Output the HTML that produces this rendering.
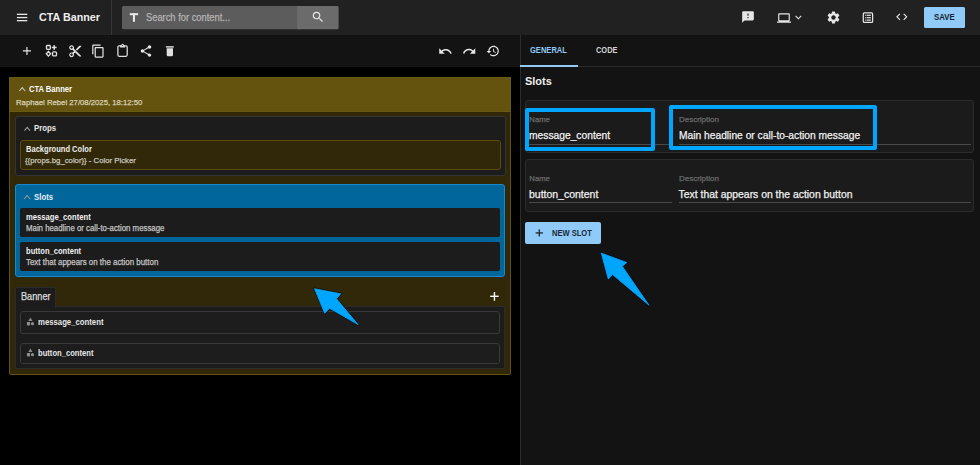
<!DOCTYPE html>
<html><head><meta charset="utf-8">
<style>
*{box-sizing:border-box;margin:0;padding:0}
html,body{width:980px;height:465px;overflow:hidden;background:#000;font-family:"Liberation Sans",sans-serif;color:#fff;position:relative}
.a{position:absolute}
.t{white-space:nowrap;line-height:1;transform-origin:0 0}
svg{display:block;overflow:visible}
</style></head><body>
<!-- backgrounds -->
<div class="a" style="left:0;top:0;width:980px;height:35px;background:#212121"></div>
<div class="a" style="left:0;top:35px;width:520px;height:31.5px;background:#131313"></div>
<div class="a" style="left:520px;top:35px;width:460px;height:430px;background:#131313"></div>
<div class="a" style="left:520px;top:35px;width:1px;height:430px;background:#2c2c2c"></div>

<!-- ===== top bar ===== -->
<svg class="a" style="left:0;top:0" width="980" height="35">
  <g fill="#e6e6e6">
    <rect x="16.9" y="13.7" width="10.4" height="1.3"/>
    <rect x="16.9" y="16.9" width="10.4" height="1.3"/>
    <rect x="16.9" y="20.0" width="10.4" height="1.3"/>
  </g>
  <rect x="111" y="0" width="1" height="35" fill="#363636"/>
  <rect x="122" y="6" width="178" height="23.2" rx="1.5" fill="#5c5c5c"/>
  <rect x="297.4" y="6" width="41.2" height="23.2" rx="1.5" fill="#6b6b6b"/><rect x="297.4" y="6" width="4" height="23.2" fill="#6b6b6b"/>
  <!-- T icon -->
  <g fill="#e8e8e8">
    <rect x="129.8" y="13.2" width="8.3" height="2"/>
    <rect x="132.9" y="13.2" width="2.1" height="8.6"/>
  </g>
</svg>
<svg class="a" style="left:311.2px;top:10.3px" width="14" height="14" viewBox="0 0 24 24"><path fill="#e6e6e6" d="M15.5 14h-.79l-.28-.27A6.47 6.47 0 0 0 16 9.5 6.5 6.5 0 1 0 9.5 16c1.61 0 3.09-.59 4.23-1.57l.27.28v.79l5 4.99L20.49 19l-4.99-5zm-6 0C7.01 14 5 11.99 5 9.5S7.01 5 9.5 5 14 7.01 14 9.5 11.99 14 9.5 14z"/></svg>
<!-- right icons -->
<svg class="a" style="left:741px;top:10px" width="14" height="14" viewBox="0 0 24 24"><path fill="#e6e6e6" d="M20 2H4c-1.1 0-1.99.9-1.99 2L2 22l4-4h14c1.1 0 2-.9 2-2V4c0-1.1-.9-2-2-2zm-7 12h-2v-2h2v2zm0-4h-2V6h2v4z"/></svg>
<svg class="a" style="left:777px;top:10.6px" width="14" height="14" viewBox="0 0 24 24"><path fill="#e6e6e6" d="M20 18c1.1 0 1.99-.9 1.99-2L22 6c0-1.1-.9-2-2-2H4c-1.1 0-2 .9-2 2v10c0 1.1.9 2 2 2H0v2h24v-2h-4zM4 6h16v10H4V6z"/></svg>
<svg class="a" style="left:791.8px;top:11.1px" width="12.8" height="12.8" viewBox="0 0 24 24"><path fill="#e6e6e6" d="M7.41 8.59L12 13.17l4.59-4.58L18 10l-6 6-6-6 1.41-1.41z"/></svg>
<svg class="a" style="left:826px;top:10px" width="15" height="15" viewBox="0 0 24 24"><path fill="#e6e6e6" d="M19.14 12.94c.04-.3.06-.61.06-.94 0-.32-.02-.64-.07-.94l2.03-1.58a.49.49 0 0 0 .12-.61l-1.92-3.32a.488.488 0 0 0-.59-.22l-2.39.96c-.5-.38-1.03-.7-1.62-.94l-.36-2.54a.484.484 0 0 0-.48-.41h-3.84c-.24 0-.43.17-.47.41l-.36 2.54c-.59.24-1.13.57-1.62.94l-2.39-.96c-.22-.08-.47 0-.59.22L2.74 8.87c-.12.21-.08.47.12.61l2.03 1.58c-.05.3-.09.63-.09.94s.02.64.07.94l-2.03 1.58a.49.49 0 0 0-.12.61l1.92 3.32c.12.22.37.29.59.22l2.39-.96c.5.38 1.03.7 1.62.94l.36 2.54c.05.24.24.41.48.41h3.84c.24 0 .44-.17.47-.41l.36-2.54c.59-.24 1.13-.56 1.62-.94l2.39.96c.22.08.47 0 .59-.22l1.92-3.32c.12-.22.07-.47-.12-.61l-2.01-1.58zM12 15.6c-1.98 0-3.6-1.62-3.6-3.6s1.62-3.6 3.6-3.6 3.6 1.62 3.6 3.6-1.62 3.6-3.6 3.6z"/></svg>
<svg class="a" style="left:0;top:0" width="980" height="35"><rect x="863.3" y="12.9" width="9.3" height="9.5" rx="1" fill="none" stroke="#e6e6e6" stroke-width="1.25"/><g fill="#e0e0e0"><rect x="865.2" y="14.7" width="1.2" height="1.2"/><rect x="866.9" y="14.7" width="4" height="1.2"/><rect x="865.2" y="17.1" width="1.2" height="1.2"/><rect x="866.9" y="17.1" width="4" height="1.2"/><rect x="865.2" y="19.5" width="1.2" height="1.2"/><rect x="866.9" y="19.5" width="4" height="1.2"/></g></svg>
<svg class="a" style="left:895px;top:10px" width="13.6" height="13.6" viewBox="0 0 24 24"><path fill="#e6e6e6" d="M9.4 16.6L4.8 12l4.6-4.6L8 6l-6 6 6 6 1.4-1.4zm5.2 0l4.6-4.6-4.6-4.6L16 6l6 6-6 6-1.4-1.4z"/></svg>
<div class="a" style="left:924px;top:7px;width:41px;height:21.3px;background:#90caf9;border-radius:1.5px"></div>

<!-- ===== toolbar ===== -->
<svg class="a" style="left:20.1px;top:44px" width="13.9" height="13.9" viewBox="0 0 24 24"><path fill="#e6e6e6" d="M19 13h-6v6h-2v-6H5v-2h6V5h2v6h6v2z"/></svg>
<svg class="a" style="left:0;top:0" width="200" height="66">
  <g fill="none" stroke="#e0e0e0" stroke-width="1.35">
    <rect x="46.5" y="45.5" width="3.8" height="3.8" rx="0.8"/>
    <path d="M48.45 51.5 L50.6 53.8 L48.45 56.1 L46.3 53.8 Z"/>
    <rect x="52.5" y="51.9" width="4" height="4" rx="1.2"/>
  </g>
  <g fill="#e0e0e0">
    <rect x="51.8" y="46.7" width="4.8" height="1.5"/>
    <rect x="53.45" y="45.1" width="1.5" height="4.7"/>
  </g>
  <!-- trash -->
  <g fill="#e0e0e0">
    <rect x="165.8" y="45.9" width="8.1" height="1.8" rx="0.6" fill="#b8b8b8"/>
    <path d="M166.7 48.2 H173 V54.8 Q173 56.3 171.5 56.3 H168.2 Q166.7 56.3 166.7 54.8 Z"/>
  </g>
  <!-- clipboard -->
  <g fill="none" stroke="#e0e0e0" stroke-width="1.25">
    <rect x="117.9" y="45.9" width="9.3" height="10.4" rx="1.2"/>
  </g>
  <path d="M120.1 47.6 H125.1 V45.9 Q125.1 45.2 124.4 45.2 H123.9 Q123.7 43.8 122.6 43.8 Q121.5 43.8 121.3 45.2 H120.8 Q120.1 45.2 120.1 45.9 Z" fill="#e0e0e0"/><circle cx="122.6" cy="45.3" r="0.55" fill="#131313"/>
</svg>
<svg class="a" style="left:67.7px;top:44.2px" width="14.4" height="14.4" viewBox="0 0 24 24"><path fill="#e6e6e6" d="M9.64 7.64c.23-.5.36-1.05.36-1.64 0-2.21-1.79-4-4-4S2 3.79 2 6s1.79 4 4 4c.59 0 1.14-.13 1.64-.36L10 12l-2.36 2.36C7.14 14.13 6.59 14 6 14c-2.21 0-4 1.79-4 4s1.79 4 4 4 4-1.79 4-4c0-.59-.13-1.14-.36-1.64L12 14l7 7h3v-1L9.64 7.64zM6 8c-1.1 0-2-.89-2-2s.9-2 2-2 2 .89 2 2-.9 2-2 2zm0 12c-1.1 0-2-.89-2-2s.9-2 2-2 2 .89 2 2-.9 2-2 2zm6-7.5c-.28 0-.5-.22-.5-.5s.22-.5.5-.5.5.22.5.5-.22.5-.5.5zM19 3l-6 6 2 2 7-7V3z"/></svg>
<svg class="a" style="left:91.4px;top:43.7px" width="14.4" height="14.4" viewBox="0 0 24 24"><path fill="#e6e6e6" d="M16 1H4c-1.1 0-2 .9-2 2v14h2V3h12V1zm3 4H8c-1.1 0-2 .9-2 2v14c0 1.1.9 2 2 2h11c1.1 0 2-.9 2-2V7c0-1.1-.9-2-2-2zm0 16H8V7h11v14z"/></svg>
<svg class="a" style="left:139.15px;top:43.8px" width="14" height="14" viewBox="0 0 24 24"><path fill="#e6e6e6" d="M18 16.08c-.76 0-1.44.3-1.96.77L8.91 12.7c.05-.23.09-.46.09-.7s-.04-.47-.09-.7l7.05-4.11c.54.5 1.25.81 2.04.81 1.66 0 3-1.34 3-3s-1.34-3-3-3-3 1.34-3 3c0 .24.04.47.09.7L8.04 9.81C7.5 9.31 6.79 9 6 9c-1.66 0-3 1.34-3 3s1.34 3 3 3c.79 0 1.5-.31 2.04-.81l7.12 4.16c-.05.21-.08.43-.08.65 0 1.61 1.31 2.92 2.92 2.92 1.61 0 2.92-1.31 2.92-2.92s-1.31-2.92-2.92-2.92z"/></svg>
<svg class="a" style="left:437.6px;top:43.5px" width="14.8" height="14.8" viewBox="0 0 24 24"><path fill="#e6e6e6" d="M12.5 8c-2.65 0-5.05.99-6.9 2.6L2 7v9h9l-3.62-3.62c1.39-1.16 3.16-1.88 5.12-1.88 3.54 0 6.55 2.31 7.6 5.5l2.37-.78C21.08 11.03 17.15 8 12.5 8z"/></svg>
<svg class="a" style="left:461.8px;top:43.6px" width="14.5" height="14.5" viewBox="0 0 24 24"><path fill="#e6e6e6" d="M18.4 10.6C16.55 8.99 14.15 8 11.5 8c-4.65 0-8.58 3.03-9.96 7.22L3.9 16c1.05-3.19 4.05-5.5 7.6-5.5 1.95 0 3.73.72 5.12 1.88L13 16h9V7l-3.6 3.6z"/></svg>
<svg class="a" style="left:486.1px;top:44px" width="14" height="14" viewBox="0 0 24 24"><path fill="#e6e6e6" d="M13 3c-4.97 0-9 4.03-9 9H1l3.89 3.89.07.14L9 12H6c0-3.87 3.13-7 7-7s7 3.13 7 7-3.13 7-7 7c-1.93 0-3.68-.79-4.94-2.06l-1.42 1.42C8.27 19.99 10.51 21 13 21c4.97 0 9-4.03 9-9s-4.03-9-9-9zm-1 5v5l4.28 2.54.72-1.21-3.5-2.08V8H12z"/></svg>

<!-- ===== right panel ===== -->
<div class="a" style="left:521px;top:66px;width:459px;height:1px;background:#2a2a2a"></div>
<div class="a" style="left:520px;top:65px;width:57.5px;height:2px;background:#90caf9"></div>
<!-- card 1 -->
<div class="a" style="left:525px;top:100.3px;width:449.4px;height:52.6px;background:#1b1b1b;border:1px solid #2b2b2b;border-radius:3px"></div>
<div class="a" style="left:525px;top:158.5px;width:449.4px;height:53.1px;background:#1b1b1b;border:1px solid #2b2b2b;border-radius:3px"></div>
<div class="a" style="left:529px;top:144px;width:142.6px;height:1px;background:#4a4a4a"></div>
<div class="a" style="left:678.6px;top:144px;width:292.4px;height:1px;background:#4a4a4a"></div>
<div class="a" style="left:529px;top:202.4px;width:142.6px;height:1px;background:#4a4a4a"></div>
<div class="a" style="left:678.6px;top:202.4px;width:292.4px;height:1px;background:#4a4a4a"></div>
<!-- highlight boxes -->
<div class="a" style="left:525px;top:108px;width:130px;height:43px;border:4px solid #00a6fd;border-radius:2px"></div>
<div class="a" style="left:669.2px;top:105.2px;width:207.8px;height:45.2px;border:4px solid #00a6fd;border-radius:2px"></div>
<!-- new slot -->
<div class="a" style="left:525px;top:222.3px;width:76px;height:21.5px;background:#90caf9;border-radius:2px"></div>
<svg class="a" style="left:0;top:0" width="980" height="465"><g fill="#1d2833"><rect x="535.6" y="232.3" width="7.4" height="1.3"/><rect x="538.65" y="229.4" width="1.3" height="7.1"/></g></svg>

<!-- ===== left canvas ===== -->
<!-- yellow container -->
<div class="a" style="left:9px;top:77px;width:502px;height:298px;background:#302809;border:1px solid #625210;border-radius:0 0 2px 2px"></div>
<div class="a" style="left:9px;top:77px;width:502px;height:35px;background:#63530f;border:1px solid #6a5912"></div>
<!-- props box -->
<div class="a" style="left:15px;top:116px;width:491px;height:59.5px;background:#1c1c1c;border:1px solid #343434;border-radius:3px"></div>
<div class="a" style="left:19.8px;top:139.8px;width:480.8px;height:30.2px;background:#302809;border:1px solid #5b4b0d;border-radius:3px"></div>
<!-- slots box -->
<div class="a" style="left:14.6px;top:184px;width:490.8px;height:92.8px;background:#01669c;border:1px solid #1688cc;border-radius:3px"></div>
<div class="a" style="left:20px;top:208.2px;width:480px;height:28.8px;background:#1c1c1c;border-radius:2px"></div>
<div class="a" style="left:20px;top:242px;width:480px;height:29.4px;background:#1c1c1c;border-radius:2px"></div>
<!-- banner tab & content -->
<div class="a" style="left:15px;top:306px;width:490px;height:63.4px;background:#1c1c1c;border:1px solid #2c2c2c"></div>
<div class="a" style="left:15px;top:287px;width:40.5px;height:20.5px;background:#1c1c1c;border:1px solid #2c2c2c;border-bottom:none;border-radius:2px 2px 0 0"></div>
<div class="a" style="left:20px;top:311px;width:480px;height:22.6px;background:#1d1d1d;border:1px solid #393939;border-radius:3px"></div>
<div class="a" style="left:20px;top:342.7px;width:480px;height:21.8px;background:#1d1d1d;border:1px solid #393939;border-radius:3px"></div>
<svg class="a" style="left:0;top:0" width="520" height="400">
  <g fill="none" stroke="#c8c8b8" stroke-width="1.1">
    <path d="M19.3 91 L22.25 87.6 L25.2 91"/>
  </g>
  <g fill="none" stroke="#9a9a9a" stroke-width="1.1">
    <path d="M24.4 130.6 L27.2 127.4 L30 130.6"/>
    <path d="M24 199 L27.1 195.5 L30.2 199"/>
  </g>
  <g fill="#ffffff">
    <rect x="490.2" y="295.6" width="8.5" height="1.4"/>
    <rect x="493.75" y="292" width="1.4" height="8.7"/>
  </g>
  <!-- category icons -->
  <g fill="#8c8c8c">
    <path d="M30.4 317.6 L32.5 321.1 L28.3 321.1 Z"/>
    <rect x="26.9" y="322" width="3.1" height="3.4"/>
    <circle cx="32.45" cy="323.7" r="1.65"/>
    <path d="M30.4 348.6 L32.5 352.1 L28.3 352.1 Z"/>
    <rect x="26.9" y="353" width="3.1" height="3.4"/>
    <circle cx="32.45" cy="354.7" r="1.65"/>
  </g>
</svg>

<!-- TEXTS -->
<div class="a t" style="left:39.44px;top:12px;font-size:11px;font-weight:bold;color:#eeeeee;transform:scaleX(0.979);">CTA Banner</div>
<div class="a t" style="left:145.60px;top:13px;font-size:10px;font-weight:normal;color:#b4b4b4;transform:scaleX(0.933);-webkit-text-stroke:0.25px currentColor;">Search for content...</div>
<div class="a t" style="left:934.22px;top:12px;font-size:9.6px;font-weight:bold;color:#17222c;transform:scaleX(0.811);">SAVE</div>
<div class="a t" style="left:530.27px;top:46px;font-size:8.9px;font-weight:bold;color:#90caf9;transform:scaleX(0.850);">GENERAL</div>
<div class="a t" style="left:595.57px;top:46px;font-size:8.9px;font-weight:bold;color:#d2d2d2;transform:scaleX(0.838);">CODE</div>
<div class="a t" style="left:524.94px;top:76px;font-size:11px;font-weight:bold;color:#eeeeee;">Slots</div>
<div class="a t" style="left:529.34px;top:116px;font-size:7.7px;font-weight:normal;color:#6a6a6a;-webkit-text-stroke:0.25px currentColor;">Name</div>
<div class="a t" style="left:529.18px;top:131px;font-size:10.4px;font-weight:normal;color:#f0f0f0;transform:scaleX(0.988);-webkit-text-stroke:0.25px currentColor;">message_content</div>
<div class="a t" style="left:678.74px;top:116px;font-size:7.7px;font-weight:normal;color:#6a6a6a;transform:scaleX(1.036);-webkit-text-stroke:0.25px currentColor;">Description</div>
<div class="a t" style="left:678.58px;top:131px;font-size:10.4px;font-weight:normal;color:#f0f0f0;transform:scaleX(0.986);-webkit-text-stroke:0.25px currentColor;">Main headline or call-to-action message</div>
<div class="a t" style="left:529.34px;top:175px;font-size:7.7px;font-weight:normal;color:#6a6a6a;-webkit-text-stroke:0.25px currentColor;">Name</div>
<div class="a t" style="left:529.18px;top:190px;font-size:10.4px;font-weight:normal;color:#f0f0f0;transform:scaleX(1.008);-webkit-text-stroke:0.25px currentColor;">button_content</div>
<div class="a t" style="left:678.74px;top:175px;font-size:7.7px;font-weight:normal;color:#6a6a6a;transform:scaleX(1.036);-webkit-text-stroke:0.25px currentColor;">Description</div>
<div class="a t" style="left:678.58px;top:190px;font-size:10.4px;font-weight:normal;color:#f0f0f0;-webkit-text-stroke:0.25px currentColor;">Text that appears on the action button</div>
<div class="a t" style="left:551.95px;top:229px;font-size:9.2px;font-weight:bold;color:#1b2935;transform:scaleX(0.821);">NEW SLOT</div>
<div class="a t" style="left:28.91px;top:86px;font-size:8.2px;font-weight:bold;color:#ffffff;transform:scaleX(0.927);">CTA Banner</div>
<div class="a t" style="left:15.61px;top:99px;font-size:8.1px;font-weight:normal;color:#d9d2b6;transform:scaleX(0.955);-webkit-text-stroke:0.25px currentColor;">Raphael Rebel 27/08/2025, 18:12:50</div>
<div class="a t" style="left:33.96px;top:124px;font-size:9.0px;font-weight:bold;color:#e8e8e8;transform:scaleX(0.863);">Props</div>
<div class="a t" style="left:25.70px;top:145px;font-size:8.4px;font-weight:bold;color:#eeeeee;transform:scaleX(0.901);">Background Color</div>
<div class="a t" style="left:25.42px;top:157px;font-size:8.0px;font-weight:normal;color:#c9c6bd;transform:scaleX(0.970);-webkit-text-stroke:0.25px currentColor;">{{props.bg_color}} - Color Picker</div>
<div class="a t" style="left:33.96px;top:193px;font-size:9.0px;font-weight:bold;color:#e8eef4;transform:scaleX(0.869);">Slots</div>
<div class="a t" style="left:25.69px;top:213px;font-size:8.5px;font-weight:bold;color:#f0f0f0;transform:scaleX(0.901);">message_content</div>
<div class="a t" style="left:25.69px;top:224px;font-size:8.5px;font-weight:normal;color:#c4c4c4;transform:scaleX(0.921);-webkit-text-stroke:0.25px currentColor;">Main headline or call-to-action message</div>
<div class="a t" style="left:25.69px;top:247px;font-size:8.5px;font-weight:bold;color:#f0f0f0;transform:scaleX(0.891);">button_content</div>
<div class="a t" style="left:25.69px;top:258px;font-size:8.5px;font-weight:normal;color:#c4c4c4;transform:scaleX(0.930);-webkit-text-stroke:0.25px currentColor;">Text that appears on the action button</div>
<div class="a t" style="left:21.00px;top:292px;font-size:10px;font-weight:normal;color:#dddddd;transform:scaleX(0.916);-webkit-text-stroke:0.25px currentColor;">Banner</div>
<div class="a t" style="left:37.59px;top:318px;font-size:8.5px;font-weight:bold;color:#e6e6e6;transform:scaleX(0.912);">message_content</div>
<div class="a t" style="left:37.59px;top:349px;font-size:8.5px;font-weight:bold;color:#e6e6e6;transform:scaleX(0.896);">button_content</div>

<!-- arrows -->
<svg class="a" style="left:0;top:0" width="980" height="465">
  <g fill="none" stroke="#000" stroke-opacity="0.55" stroke-width="2.4" stroke-linejoin="round">
    <path d="M314.5 288.7 L340.8 293.8 L336.5 298.7 L358.3 324.8 L329.5 308.3 L324.7 313.4 Z"/>
    <path d="M601.3 253.1 L626.9 262.5 L622.3 266.2 L649.2 305.4 L612.5 274.6 L608.3 279.2 Z"/>
  </g>
  <g fill="#00a6fd" stroke="#00a6fd" stroke-width="0.8" stroke-linejoin="round">
    <path d="M314.5 288.7 L340.8 293.8 L336.5 298.7 L358.3 324.8 L329.5 308.3 L324.7 313.4 Z"/>
    <path d="M601.3 253.1 L626.9 262.5 L622.3 266.2 L649.2 305.4 L612.5 274.6 L608.3 279.2 Z"/>
  </g>
</svg>
</body></html>
